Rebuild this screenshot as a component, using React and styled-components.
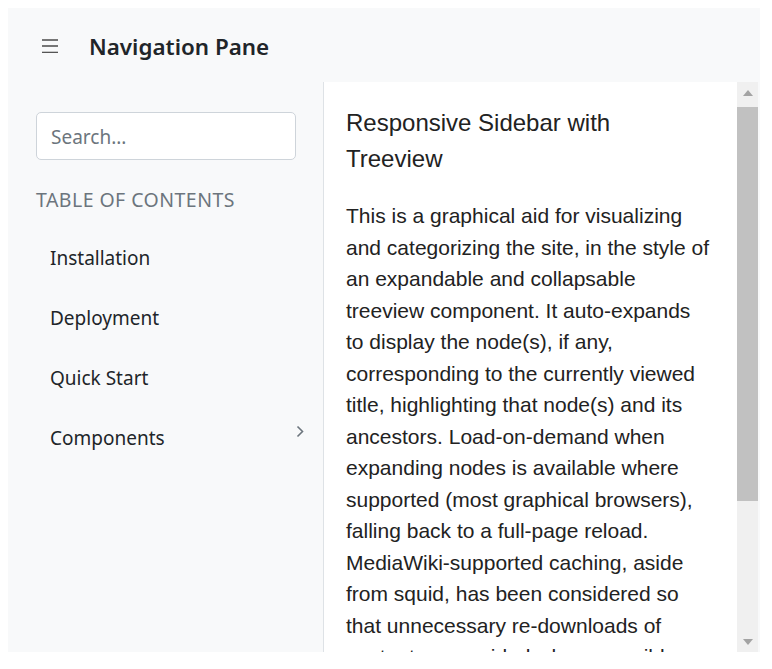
import React from "react";
import styled, { createGlobalStyle } from "styled-components";

const GlobalStyle = createGlobalStyle`
  html, body { margin: 0; padding: 0; background: #ffffff; }
  body { padding: 8px; font-family: "Noto Sans", "Open Sans", sans-serif; }
  * { box-sizing: border-box; }
`;

const Shell = styled.div`
  width: 752px;
  height: 644px;
  background: #f8f9fa;
  display: flex;
  flex-direction: column;
`;

const Header = styled.header`
  height: 74px;
  flex: none;
  display: flex;
  align-items: center;
  padding-left: 34px;
  padding-top: 2px;
  gap: 31px;
`;

const MenuButton = styled.button`
  border: 0;
  background: transparent;
  padding: 0;
  width: 16px;
  height: 16px;
  display: flex;
  align-items: center;
  justify-content: center;
  cursor: pointer;
`;

const Title = styled.h1`
  margin: 0;
  font-family: "Noto Sans", "Open Sans", sans-serif;
  font-weight: 600;
  font-size: 22.4px;
  color: #212529;
`;

const Body = styled.div`
  flex: 1;
  display: flex;
  min-height: 0;
`;

const Sidebar = styled.aside`
  width: 316px;
  flex: none;
  border-right: 1px solid #dee2e6;
  padding: 30px 27px 0 28px;
  display: flex;
  flex-direction: column;
`;

const Search = styled.input`
  width: 260px;
  height: 48px;
  flex: none;
  border: 1px solid #ced4da;
  border-radius: 5px;
  background: #ffffff;
  padding: 2px 14px 0;
  font-family: "Noto Sans", "Open Sans", sans-serif;
  font-size: 19px;
  color: #212529;
  outline: none;
  &::placeholder { color: #6c757d; }
`;

const SectionLabel = styled.div`
  margin-top: 26px;
  font-size: 19.5px;
  color: #6c757d;
  text-transform: uppercase;
  letter-spacing: 0.45px;
  line-height: 28px;
`;

const NavList = styled.ul`
  list-style: none;
  margin: 14px 0 0;
  padding: 0;
  display: flex;
  flex-direction: column;
`;

const NavItem = styled.li`
  height: 60px;
  display: flex;
  align-items: center;
  justify-content: space-between;
  padding-left: 14px;
  font-size: 19px;
  color: #212529;
  cursor: pointer;
`;

const Chevron = styled.span`
  display: flex;
  margin-top: -14px;
  margin-right: -8px;
`;

const Panel = styled.main`
  flex: none;
  width: 434px;
  background: #ffffff;
  display: flex;
  min-height: 0;
`;

const Article = styled.article`
  flex: 1;
  min-width: 0;
  overflow: hidden;
  padding: 23px 8px 24px 22px;
  font-family: "Liberation Sans", Arial, sans-serif;
  color: #222;
`;

const ScrollTrack = styled.div`
  width: 21px;
  flex: none;
  background: #f0f0f0;
  display: flex;
  flex-direction: column;
`;

const ScrollButton = styled.div`
  height: 21px;
  flex: none;
  display: flex;
  align-items: center;
  justify-content: center;
`;

const ScrollThumb = styled.div`
  margin-top: 4px;
  height: 394px;
  background: #c1c1c1;
  flex: none;
`;

const Spacer = styled.div`
  flex: 1;
`;

const ArticleTitle = styled.h2`
  margin: 0 0 23px;
  font-weight: 400;
  font-size: 24px;
  line-height: 36px;
  color: #222;
`;

const Paragraph = styled.p`
  margin: 0;
  font-size: 21px;
  line-height: 31.5px;
  color: #222;
`;

const Line = styled.span`
  display: block;
  white-space: nowrap;
`;

const items = [
  { label: "Installation" },
  { label: "Deployment" },
  { label: "Quick Start" },
  { label: "Components", children: true },
];

const titleLines = ["Responsive Sidebar with", "Treeview"];

const bodyLines = [
  "This is a graphical aid for visualizing",
  "and categorizing the site, in the style of",
  "an expandable and collapsable",
  "treeview component. It auto-expands",
  "to display the node(s), if any,",
  "corresponding to the currently viewed",
  "title, highlighting that node(s) and its",
  "ancestors. Load-on-demand when",
  "expanding nodes is available where",
  "supported (most graphical browsers),",
  "falling back to a full-page reload.",
  "MediaWiki-supported caching, aside",
  "from squid, has been considered so",
  "that unnecessary re-downloads of",
  "content are avoided where possible.",
];

export default function App() {
  return (
    <>
      <GlobalStyle />
      <Shell>
        <Header>
          <MenuButton aria-label="menu">
            <svg width="16" height="14" viewBox="0 0 16 14">
              <g stroke="#555" strokeWidth="1.6">
                <line x1="0" y1="1" x2="16" y2="1" />
                <line x1="0" y1="7" x2="16" y2="7" />
                <line x1="0" y1="13.5" x2="16" y2="13.5" />
              </g>
            </svg>
          </MenuButton>
          <Title>Navigation Pane</Title>
        </Header>
        <Body>
          <Sidebar>
            <Search placeholder="Search..." />
            <SectionLabel>Table of Contents</SectionLabel>
            <NavList>
              {items.map((it) => (
                <NavItem key={it.label}>
                  {it.label}
                  {it.children && (
                    <Chevron>
                      <svg width="8" height="13" viewBox="0 0 8 13">
                        <polyline points="1.5,1.5 6.5,6.5 1.5,11.5" fill="none" stroke="#6c757d" strokeWidth="1.6" />
                      </svg>
                    </Chevron>
                  )}
                </NavItem>
              ))}
            </NavList>
          </Sidebar>
          <Panel>
            <Article>
              <ArticleTitle>
                {titleLines.map((l) => (
                  <Line key={l}>{l}</Line>
                ))}
              </ArticleTitle>
              <Paragraph>
                {bodyLines.map((l) => (
                  <Line key={l}>{l}</Line>
                ))}
              </Paragraph>
            </Article>
            <ScrollTrack>
              <ScrollButton>
                <svg width="10" height="6" viewBox="0 0 10 6">
                  <polygon points="0,6 10,6 5,0" fill="#a3a3a3" />
                </svg>
              </ScrollButton>
              <ScrollThumb />
              <Spacer />
              <ScrollButton>
                <svg width="10" height="6" viewBox="0 0 10 6">
                  <polygon points="0,0 10,0 5,6" fill="#a3a3a3" />
                </svg>
              </ScrollButton>
            </ScrollTrack>
          </Panel>
        </Body>
      </Shell>
    </>
  );
}
